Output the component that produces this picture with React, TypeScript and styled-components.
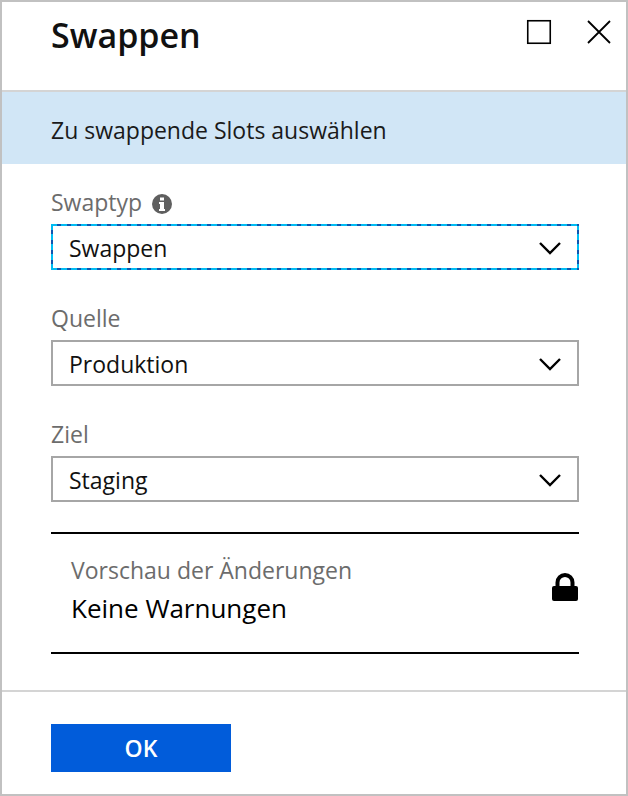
import React, { useId } from "react";
import styled, { createGlobalStyle, css } from "styled-components";

const GlobalStyle = createGlobalStyle`
  *, *::before, *::after { box-sizing: border-box; }
  body { margin: 0; background: #fff; }
  body, button, select { font-family: "Open Sans", "Noto Sans", sans-serif; }
`;

const Blade = styled.main`
  display: flex;
  flex-direction: column;
  min-height: 100vh;
  border: 2px solid #c1c1c1;
  background: #fff;
  color: #000;
`;

const Header = styled.header`
  display: flex;
  align-items: flex-start;
  justify-content: space-between;
  height: 90px;
  padding: 8px 14px 0 49px;
  border-bottom: 2px solid #d4d4d4;
`;

const Title = styled.h1`
  margin: 0;
  font-size: 34px;
  line-height: 50px;
  font-weight: 600;
  color: #111;
`;

const WindowButtons = styled.div`
  display: flex;
  gap: 34px;
  padding-top: 9px;
`;

const IconButton = styled.button`
  display: flex;
  padding: 0;
  border: 0;
  background: none;
  color: #000;
  cursor: pointer;
`;

const Banner = styled.h2`
  margin: 0;
  padding: 20px 49px 16px;
  background: #d1e6f6;
  font-size: 23px;
  line-height: 36px;
  font-weight: 400;
  color: #1a1a1a;
`;

const Form = styled.form`
  display: flex;
  flex: 1;
  flex-direction: column;
`;

const Fields = styled.div`
  display: flex;
  flex-direction: column;
  gap: 30px;
  padding: 20px 47px 36px 49px;
`;

const Field = styled.div`
  display: flex;
  flex-direction: column;
  gap: 4px;
`;

const LabelRow = styled.div`
  display: flex;
  align-items: center;
  gap: 10px;
  height: 36px;
`;

const Label = styled.label`
  font-size: 23px;
  line-height: 36px;
  font-weight: 400;
  color: #6c6c6c;
`;

const SelectBox = styled.div`
  position: relative;
  display: flex;
`;

const dashes = (direction: string) =>
  `repeating-linear-gradient(${direction}, #00bcf2 0 6px, #0f55b0 6px 10px)`;

const Select = styled.select<{ $active?: boolean }>`
  width: 100%;
  height: 46px;
  padding: 2px 60px 0 18px;
  border: 0;
  border-radius: 0;
  outline: 0;
  appearance: none;
  font-size: 23px;
  font-weight: 400;
  color: #111;
  background: #fff;
  ${(p) =>
    p.$active
      ? css`
          background:
            ${dashes("to right")} top / 100% 2px no-repeat,
            ${dashes("to right")} bottom / 100% 2px no-repeat,
            ${dashes("to bottom")} left / 2px 100% no-repeat,
            ${dashes("to bottom")} right / 2px 100% no-repeat,
            #fff;
        `
      : css`
          box-shadow: inset 0 0 0 2px #a6a6a6;
        `}
`;

const Chevron = styled.svg`
  position: absolute;
  top: 16px;
  right: 17px;
  pointer-events: none;
`;

const Preview = styled.section`
  display: flex;
  align-items: center;
  justify-content: space-between;
  height: 122px;
  margin: 0;
  padding: 0 1px 0 20px;
  border: solid #000;
  border-width: 2px 0;
`;

const PreviewText = styled.div`
  display: flex;
  flex-direction: column;
  padding-bottom: 6px;
`;

const PreviewTitle = styled.span`
  font-size: 23px;
  line-height: 36px;
  font-weight: 400;
  color: #6c6c6c;
`;

const PreviewValue = styled.span`
  font-size: 26px;
  line-height: 40px;
  font-weight: 400;
`;

const LockSlot = styled.span`
  display: flex;
  padding-bottom: 12px;
`;

const Footer = styled.footer`
  flex: 1;
  padding: 32px 49px 22px;
  border-top: 2px solid #d4d4d4;
`;

const OkButton = styled.button`
  width: 180px;
  height: 48px;
  padding: 0;
  border: 0;
  background: #015cda;
  color: #fff;
  font-size: 23px;
  font-weight: 600;
  cursor: pointer;
`;

const InfoIcon = () => (
  <svg width="20" height="24" viewBox="0 0 20 24" role="img" aria-label="Info">
    <circle cx="10" cy="14" r="10" fill="#5f5f5f" />
    <path d="M8 7.500h4v3H8zM7 12h5v7h1v2H7v-2h1v-5H7z" fill="#fff" />
  </svg>
);

type SelectFieldProps = { label: string; value: string; active?: boolean; info?: boolean };

const SelectField = ({ label, value, active, info }: SelectFieldProps) => {
  const id = useId();
  return (
    <Field>
      <LabelRow>
        <Label htmlFor={id}>{label}</Label>
        {info && <InfoIcon />}
      </LabelRow>
      <SelectBox>
        <Select id={id} $active={active} defaultValue={value}>
          <option>{value}</option>
        </Select>
        <Chevron width="24" height="16" viewBox="0 0 24 16" aria-hidden="true">
          <path d="M2 3l10 10L22 3" fill="none" stroke="#000" strokeWidth="2.4" />
        </Chevron>
      </SelectBox>
    </Field>
  );
};

export default function App() {
  return (
    <>
      <GlobalStyle />
      <Blade>
        <Header>
          <Title>Swappen</Title>
          <WindowButtons>
            <IconButton type="button" aria-label="Maximieren">
              <svg width="26" height="26" viewBox="0 0 26 26">
                <rect x="1.75" y="1.75" width="22.5" height="22.5" fill="none" stroke="#000" strokeWidth="1.6" />
              </svg>
            </IconButton>
            <IconButton type="button" aria-label="Schließen">
              <svg width="26" height="26" viewBox="0 0 26 26">
                <path d="M2 2l22 22M24 2L2 24" stroke="#000" strokeWidth="1.8" />
              </svg>
            </IconButton>
          </WindowButtons>
        </Header>
        <Banner>Zu swappende Slots auswählen</Banner>
        <Form onSubmit={(e) => e.preventDefault()}>
          <Fields>
            <SelectField label="Swaptyp" value="Swappen" active info />
            <SelectField label="Quelle" value="Produktion" />
            <SelectField label="Ziel" value="Staging" />
            <Preview>
              <PreviewText>
                <PreviewTitle>Vorschau der Änderungen</PreviewTitle>
                <PreviewValue>Keine Warnungen</PreviewValue>
              </PreviewText>
              <LockSlot>
                <svg width="26" height="28" viewBox="0 0 26 28" role="img" aria-label="Gesperrt">
                  <path d="M5.500 15V9.500a7.500 7.500 0 0 1 15 0V15" fill="none" stroke="#000" strokeWidth="4" />
                  <rect y="13" width="26" height="15" rx="2" />
                </svg>
              </LockSlot>
            </Preview>
          </Fields>
          <Footer>
            <OkButton type="submit">OK</OkButton>
          </Footer>
        </Form>
      </Blade>
    </>
  );
}
